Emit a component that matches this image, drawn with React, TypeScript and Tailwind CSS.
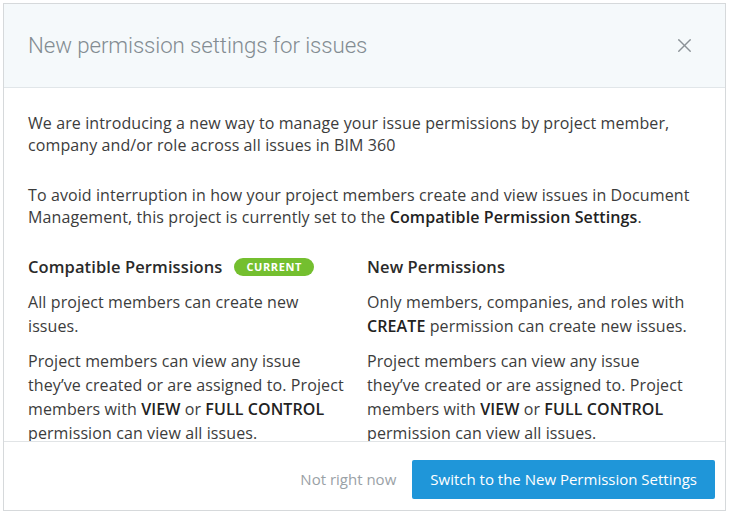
import { X } from "lucide-react";

export default function App() {
    return (
        <div className="w-[729px] h-[516px] bg-white pl-[3px] pt-[3px]" style={{ fontFamily: "'Open Sans', 'Noto Sans', sans-serif" }}>
            <div className="w-[723px] h-[508px] border border-[#d6d9db] bg-white flex flex-col overflow-hidden">

                <div className="h-[84px] shrink-0 bg-[#f5f9fb] border-b border-[#e1e6e9] flex items-center justify-between pl-6 pr-[29px]">
                    <p className="text-[22.3px] font-light text-[#838c92] tracking-[-0.1px]" style={{ fontFamily: "Roboto, sans-serif" }}>
                        New permission settings for issues
                    </p>
                    <X size={23} strokeWidth={1.4} className="text-[#8b9297]" />
                </div>

                <div className="h-[353px] shrink-0 overflow-hidden px-6 pt-[24px] text-[16px] tracking-[0.1px] leading-[22px] text-[#3c3c3c]">
                    <p>We are introducing a new way to manage your issue permissions by project member, company and/or role across all issues in BIM 360</p>
                    <p className="mt-[28px]">
                        To avoid interruption in how your project members create and view issues in Document Management, this project is currently set to the <b className="font-semibold text-[#222]">Compatible Permission Settings</b>.
                    </p>

                    <div className="grid grid-cols-[339px_322px] mt-[27px]">
                        <div className="pr-5">
                            <div className="flex items-center gap-3 h-6">
                                <p className="text-[16.5px] font-semibold text-[#2a2a2a]">Compatible Permissions</p>
                                <span className="h-[18px] px-3 rounded-full bg-[#74bf2f] text-white text-[11px] font-bold tracking-[0.6px] leading-[18px]">CURRENT</span>
                            </div>
                            <p className="mt-[12px] leading-[23.5px]">All project members can create new issues.</p>
                            <p className="mt-[11px] leading-[24px]">
                                Project members can view any issue they’ve created or are assigned to. Project members with <b className="font-semibold text-[#222]">VIEW</b> or <b className="font-semibold text-[#222]">FULL CONTROL</b> permission can view all issues.
                            </p>
                        </div>
                        <div>
                            <div className="flex items-center h-6">
                                <p className="text-[16.5px] font-semibold text-[#2a2a2a]">New Permissions</p>
                            </div>
                            <p className="mt-[12px] leading-[23.5px]">
                                Only members, companies, and roles with <b className="font-semibold text-[#222]">CREATE</b> permission can create new issues.
                            </p>
                            <p className="mt-[11px] leading-[24px]">
                                Project members can view any issue they’ve created or are assigned to. Project members with <b className="font-semibold text-[#222]">VIEW</b> or <b className="font-semibold text-[#222]">FULL CONTROL</b> permission can view all issues.
                            </p>
                        </div>
                    </div>
                </div>

                <div className="flex-1 border-t border-[#e1e4e6] flex items-start justify-end gap-4 pt-[18px] pr-[10px]">
                    <button className="h-[39px] text-[15px] text-[#9aa1a6]">Not right now</button>
                    <button className="h-[39px] px-[18px] rounded-[2px] bg-[#1f96d9] text-white text-[15px]">
                        Switch to the New Permission Settings
                    </button>
                </div>
            </div>
        </div>
    );
}
